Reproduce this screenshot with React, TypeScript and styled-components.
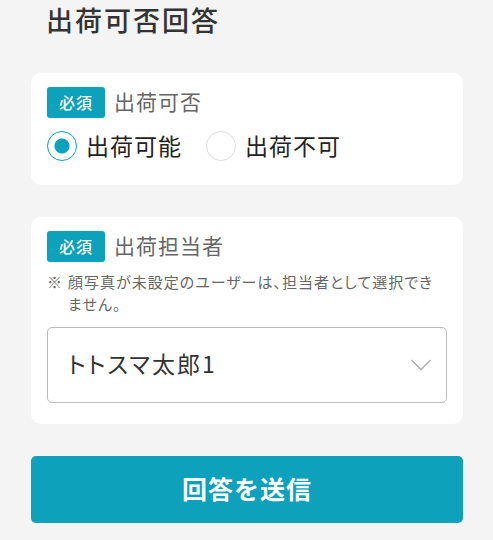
import React, { useState } from "react";
import styled, { createGlobalStyle } from "styled-components";

const GlobalStyle = createGlobalStyle`
  *, *::before, *::after { box-sizing: border-box; }
  body {
    margin: 0;
    background: #f4f4f4;
    color: #222;
    font-family: "Noto Sans CJK JP", "Noto Sans", sans-serif;
  }
`;

const Form = styled.form`
  display: flex;
  flex-direction: column;
  gap: 32px;
  padding: 0 30px 17px 31px;
`;

const Title = styled.h1`
  margin: 0;
  padding: 0 0 1px 15px;
  color: #333;
  font-size: 27px;
  line-height: 40px;
  font-weight: 500;
  letter-spacing: 2px;
`;

const Card = styled.fieldset`
  min-width: 0;
  margin: 0;
  padding: 14px 16px 21px;
  border: 0;
  border-radius: 10px;
  background: #fff;
`;

const Heading = styled.div`
  display: flex;
  align-items: flex-start;
  gap: 9px;
  color: #666;
  font-size: 21px;
  line-height: 28px;
  letter-spacing: 1px;
`;

const Required = styled.span`
  width: 58px;
  border-radius: 3px;
  background: #0da1bb;
  color: #fff;
  font-size: 16px;
  font-weight: 500;
  line-height: 31px;
  letter-spacing: 1px;
  text-align: center;
`;

const Options = styled.div`
  display: flex;
  gap: 24px;
  padding-top: 10px;
`;

const Option = styled.label`
  display: flex;
  align-items: center;
  gap: 9px;
  height: 36px;
  font-size: 23px;
  line-height: 32px;
  letter-spacing: 1px;
`;

const OptionText = styled.span`
  padding-bottom: 3px;
`;

const Radio = styled.input`
  appearance: none;
  width: 30px;
  height: 30px;
  margin: 0;
  border: 1px solid #ddd;
  border-radius: 50%;
  background: #fff;
  &:checked {
    border-color: #0da1bb;
    background: radial-gradient(circle, #0da1bb 7px, #fff 8px);
  }
`;

const Note = styled.p`
  display: flex;
  gap: 5px;
  margin: 9px 0 12px;
  padding-right: 8px;
  color: #666;
  font-size: 15px;
  line-height: 22px;
  letter-spacing: 1px;
  font-feature-settings: "palt";
`;

const SelectBox = styled.div`
  display: grid;
  align-items: center;
  & > * { grid-area: 1 / 1; }
  & > svg { justify-self: end; margin-right: 15px; pointer-events: none; }
`;

const Select = styled.select`
  appearance: none;
  width: 100%;
  height: 76px;
  padding: 0 48px 4px 20px;
  border: 1px solid #bbb;
  border-radius: 5px;
  background: #fff;
  color: #333;
  font: inherit;
  font-size: 23px;
  letter-spacing: 2px;
  font-feature-settings: "palt";
`;

const Submit = styled.button`
  height: 67px;
  padding: 0 0 4px;
  border: 0;
  border-radius: 5px;
  background: #0da1bb;
  color: #fff;
  font: inherit;
  font-size: 25px;
  font-weight: 700;
  letter-spacing: 1px;
`;

export default function App() {
  const [answer, setAnswer] = useState("yes");
  return (
    <>
      <GlobalStyle />
      <Form onSubmit={(e) => e.preventDefault()}>
        <Title>出荷可否回答</Title>
        <Card aria-labelledby="availability">
          <Heading><Required>必須</Required><span id="availability">出荷可否</span></Heading>
          <Options>
            <Option>
              <Radio type="radio" name="answer" checked={answer === "yes"} onChange={() => setAnswer("yes")} />
              <OptionText>出荷可能</OptionText>
            </Option>
            <Option>
              <Radio type="radio" name="answer" checked={answer === "no"} onChange={() => setAnswer("no")} />
              <OptionText>出荷不可</OptionText>
            </Option>
          </Options>
        </Card>
        <Card>
          <Heading><Required>必須</Required><label htmlFor="person">出荷担当者</label></Heading>
          <Note><span>※</span><span>顔写真が未設定のユーザーは、担当者として選択できません。</span></Note>
          <SelectBox>
            <Select id="person"><option>トトスマ太郎1</option></Select>
            <svg width="22" height="14" viewBox="0 0 22 14" fill="none" stroke="#aaa" strokeWidth="1.3" aria-hidden="true"><path d="M1.5 2L11 11.5L20.5 2" /></svg>
          </SelectBox>
        </Card>
        <Submit>回答を送信</Submit>
      </Form>
    </>
  );
}
